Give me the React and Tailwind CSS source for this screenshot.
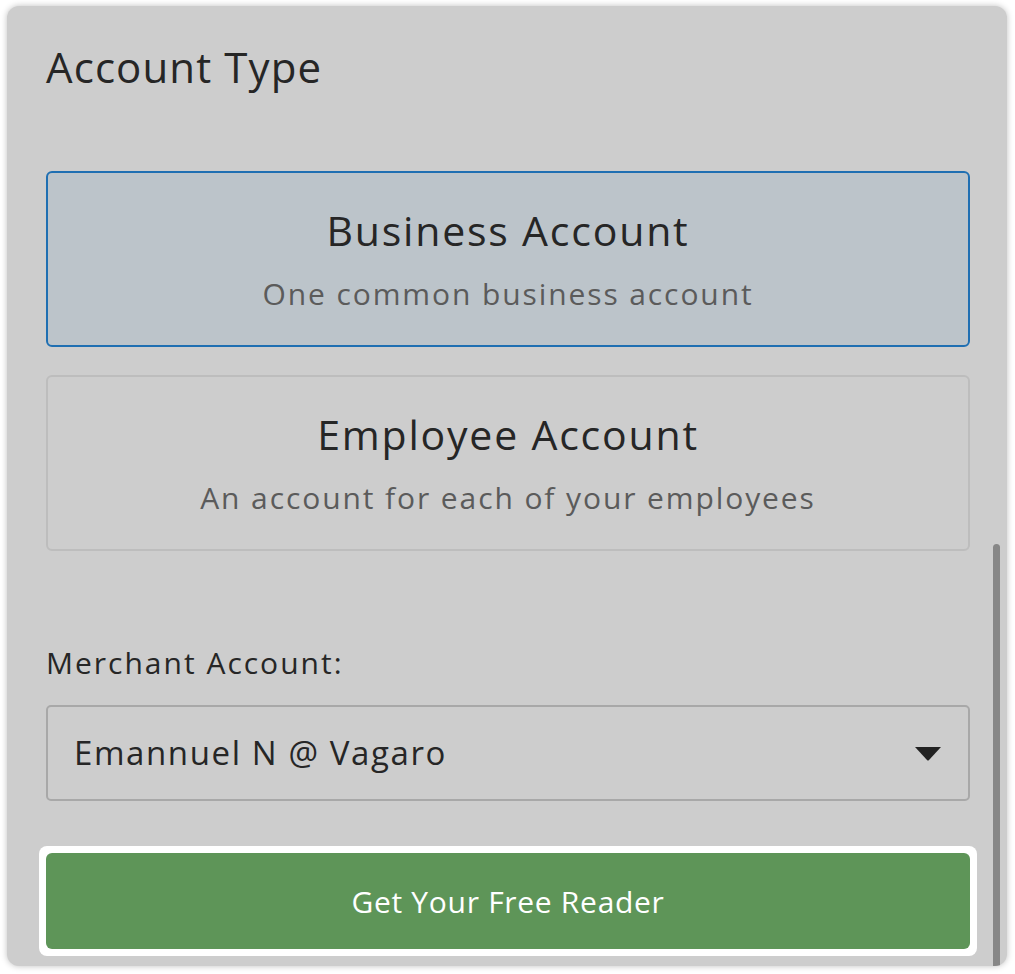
import React from 'react';

const font = { fontFamily: '"Open Sans", Lato, sans-serif' };

function AccountCard({ title, subtitle, selected }) {
  return (
    <div
      className={`h-[176px] rounded-[6px] border-2 flex flex-col items-center justify-center ${
        selected ? 'border-[#1f6fb2] bg-[#bcc4ca]' : 'border-[#bdbdbd] bg-[#cdcdcd]'
      }`}
    >
      <div className="text-[41px] leading-[46px] tracking-[1.8px] text-[#262626]">{title}</div>
      <div className="mt-[24px] text-[30px] leading-[34px] tracking-[1.9px] text-[#5b5b5b]">{subtitle}</div>
    </div>
  );
}

export default function App() {
  return (
    <div className="w-[1015px] h-[974px] bg-white pt-[6px] pl-[7px]" style={font}>
      <div className="relative w-[1000px] h-[960px] rounded-[12px] bg-[#cdcdcd] shadow-[0_0_6px_rgba(0,0,0,0.25)] overflow-hidden">
        <div className="pl-[39px] pr-[37px] pt-[35px]">
          <h1 className="text-[42px] leading-[52px] tracking-[1.1px] text-[#262626]">Account Type</h1>

          <div className="mt-[78px] flex flex-col gap-[28px]">
            <AccountCard title="Business Account" subtitle="One common business account" selected />
            <AccountCard title="Employee Account" subtitle="An account for each of your employees" />
          </div>

          <div className="mt-[94px] text-[30px] leading-[36px] tracking-[2px] text-[#262626]">Merchant Account:</div>

          <div className="mt-[24px] h-[96px] rounded-[5px] border-2 border-[#a8a8a8] flex items-center justify-between pl-[26px] pr-[26px]">
            <span className="text-[33px] tracking-[1.6px] text-[#262626]">Emannuel N @ Vagaro</span>
            <svg width="28" height="15" viewBox="0 0 28 15">
              <path d="M1 1 H27 L15 14 Q14 15 13 14 Z" fill="#222" />
            </svg>
          </div>

          <div className="mt-[45px] -mx-[7px] p-[7px] bg-white rounded-[8px]">
            <button className="w-full h-[96px] rounded-[6px] bg-[#5e9558] text-white text-[30px] tracking-[0.7px]">
              Get Your Free Reader
            </button>
          </div>
        </div>

        <div className="absolute left-[986px] top-[538px] bottom-0 w-[7px] rounded-t-full bg-[#878787]" />
      </div>
    </div>
  );
}
